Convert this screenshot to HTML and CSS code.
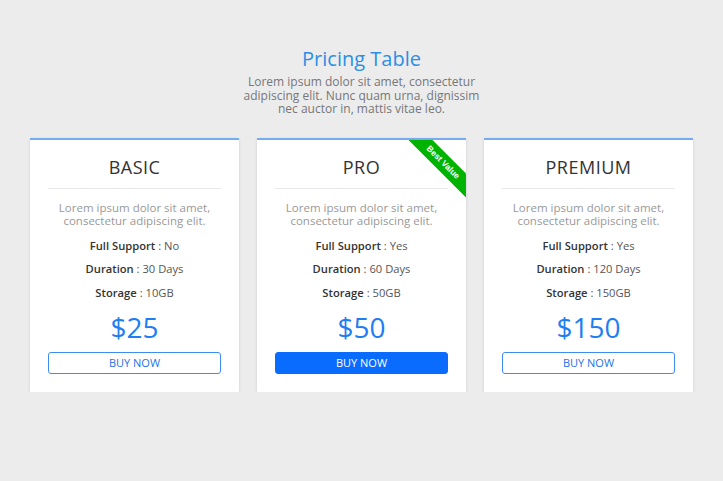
FILE: index.html
```html
<!DOCTYPE html>
<html>
<head>
<meta charset="utf-8">
<link rel="stylesheet" href="styles.css">
</head>
<body>
<div class="page">
  <header class="intro">
    <h1 class="intro-title">Pricing Table</h1>
    <p class="intro-text">Lorem ipsum dolor sit amet, consectetur adipiscing elit. Nunc quam urna, dignissim nec auctor in, mattis vitae leo.</p>
  </header>
  <div class="plans">
    <div class="plan">
      <h2 class="plan-name">BASIC</h2>
      <p class="plan-desc">Lorem ipsum dolor sit amet, consectetur adipiscing elit.</p>
      <ul class="features">
        <li><b>Full Support</b> : No</li>
        <li><b>Duration</b> : 30 Days</li>
        <li><b>Storage</b> : 10GB</li>
      </ul>
      <div class="price">$25</div>
      <a class="btn">BUY NOW</a>
    </div>
    <div class="plan">
      <div class="ribbon">Best Value</div>
      <h2 class="plan-name">PRO</h2>
      <p class="plan-desc">Lorem ipsum dolor sit amet, consectetur adipiscing elit.</p>
      <ul class="features">
        <li><b>Full Support</b> : Yes</li>
        <li><b>Duration</b> : 60 Days</li>
        <li><b>Storage</b> : 50GB</li>
      </ul>
      <div class="price">$50</div>
      <a class="btn btn-solid">BUY NOW</a>
    </div>
    <div class="plan">
      <h2 class="plan-name">PREMIUM</h2>
      <p class="plan-desc">Lorem ipsum dolor sit amet, consectetur adipiscing elit.</p>
      <ul class="features">
        <li><b>Full Support</b> : Yes</li>
        <li><b>Duration</b> : 120 Days</li>
        <li><b>Storage</b> : 150GB</li>
      </ul>
      <div class="price">$150</div>
      <a class="btn">BUY NOW</a>
    </div>
  </div>
</div>
</body>
</html>
```
FILE: styles.css
```css
* { box-sizing: border-box; }
html, body {
  margin: 0;
  padding: 0;
  background: #ececec;
  font-family: "Open Sans", "DejaVu Sans", sans-serif;
}
.page {
  padding-top: 46px;
}
.intro {
  text-align: center;
  margin-bottom: 22px;
}
.intro-title {
  margin: 0;
  font-size: 20px;
  line-height: 26px;
  font-weight: 400;
  color: #2c8fe3;
}
.intro-text {
  margin: 3px auto 0;
  width: 240px;
  font-size: 12px;
  line-height: 13.5px;
  color: #777;
}
.plans {
  display: flex;
  justify-content: center;
  gap: 18px;
}
.plan {
  position: relative;
  overflow: hidden;
  width: 209px;
  background: #fff;
  border-top: 2px solid #78aaf0;
  box-shadow: 0 1px 3px rgba(0,0,0,0.12);
  padding: 16px 18px 18px;
  text-align: center;
}
.plan-name {
  margin: 0;
  font-size: 18px;
  line-height: 22px;
  font-weight: 400;
  letter-spacing: 0.5px;
  color: #333;
  padding-bottom: 10px;
  border-bottom: 1px solid #e8e8e8;
}
.plan-desc {
  margin: 12px 0 0;
  font-size: 11.5px;
  line-height: 13.5px;
  color: #999;
}
.features {
  list-style: none;
  margin: 6px 0 0;
  padding: 0;
  font-size: 11.2px;
  line-height: 23.5px;
  color: #555;
}
.features b {
  font-weight: 600;
  color: #333;
}
.price {
  margin-top: 6px;
  font-size: 28px;
  line-height: 34px;
  color: #1f7ef2;
}
.btn {
  display: block;
  margin-top: 8px;
  height: 22px;
  line-height: 20px;
  border: 1px solid #3d8cf2;
  border-radius: 3px;
  font-size: 11px;
  color: #1a73e8;
  font-weight: 500;
}
.btn-solid {
  background: #0a6cff;
  border-color: #0a6cff;
  color: #fff;
}
.ribbon {
  position: absolute;
  left: 136px;
  top: 14.5px;
  width: 100px;
  height: 17px;
  line-height: 17px;
  background: #00b300;
  color: #fff;
  font-family: "Liberation Sans", Arial, sans-serif;
  font-size: 8.5px;
  font-weight: 700;
  text-align: center;
  transform: rotate(45deg);
}
```
